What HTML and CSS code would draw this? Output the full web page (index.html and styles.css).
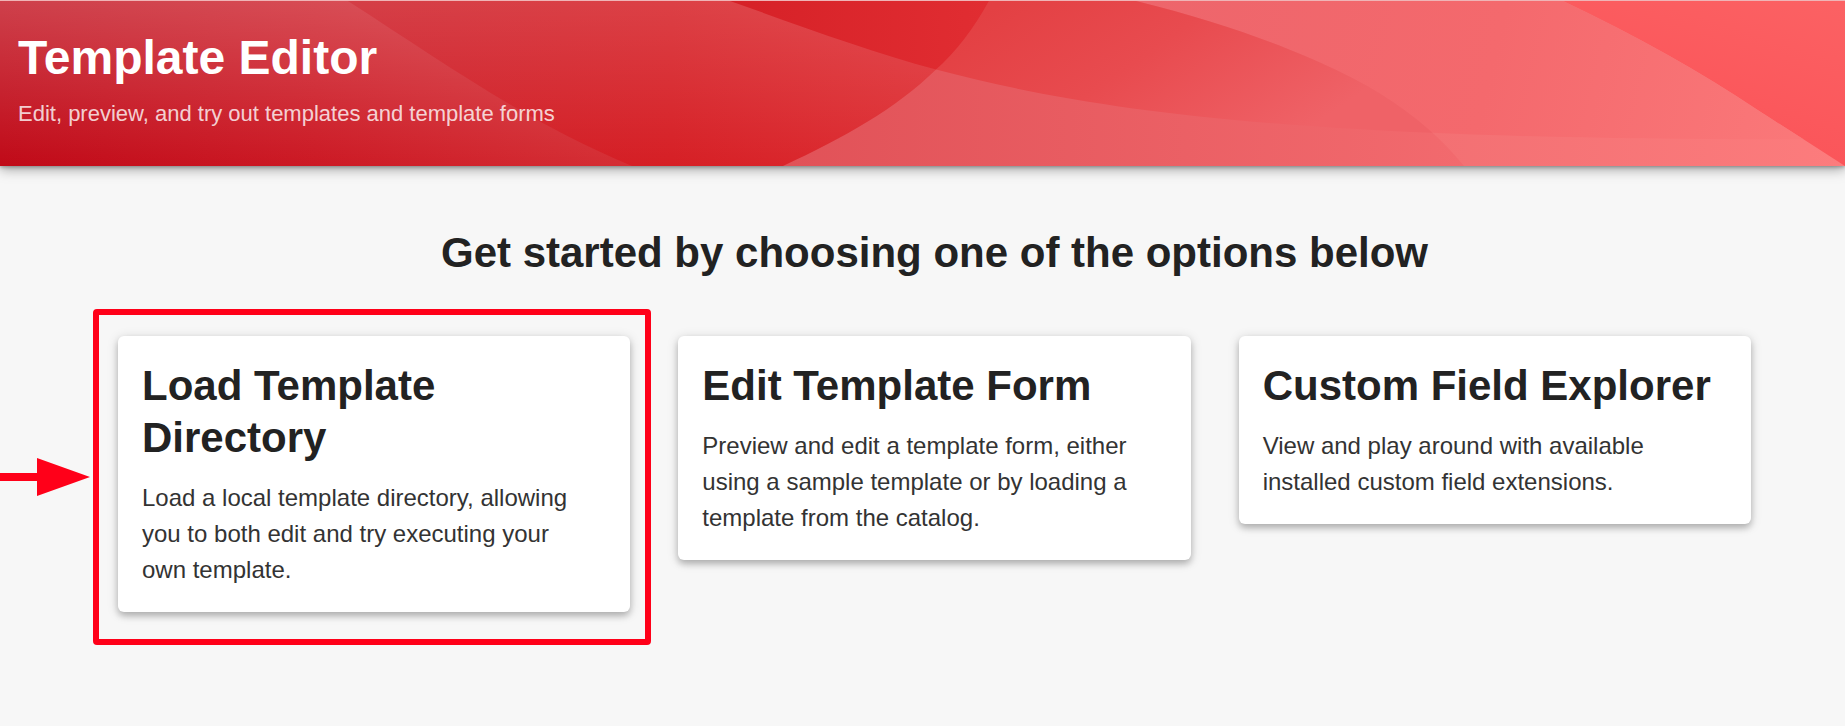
FILE: index.html
```html
<!DOCTYPE html>
<html lang="en">
<head>
<meta charset="utf-8">
<meta name="viewport" content="width=device-width, initial-scale=1">
<title>Template Editor</title>
<link rel="stylesheet" href="styles.css">
</head>
<body>
<header class="header">
  <svg class="header-art" viewBox="0 0 1845 166" preserveAspectRatio="none" aria-hidden="true">
    <defs>
      <linearGradient id="right" gradientUnits="userSpaceOnUse" x1="1700" y1="166" x2="1760" y2="-20"><stop offset="0" stop-color="#fa5257"/><stop offset=".4" stop-color="#fb585c"/><stop offset="1" stop-color="#fb6163"/></linearGradient>
      <linearGradient id="pale" gradientUnits="userSpaceOnUse" x1="1130" y1="0" x2="1845" y2="166"><stop offset="0" stop-color="#ed656b"/><stop offset=".5" stop-color="#f4696d"/><stop offset="1" stop-color="#fb7a7b"/></linearGradient>
      <linearGradient id="paleLow" gradientUnits="userSpaceOnUse" x1="1430" y1="0" x2="1845" y2="0"><stop offset="0" stop-color="#f37073"/><stop offset="1" stop-color="#fc7c7d"/></linearGradient>
      <linearGradient id="low" gradientUnits="userSpaceOnUse" x1="790" y1="0" x2="1464" y2="0"><stop offset="0" stop-color="#e15258"/><stop offset="1" stop-color="#f26a6e"/></linearGradient>
      <linearGradient id="mid" gradientUnits="userSpaceOnUse" x1="1060" y1="-40" x2="1220" y2="190"><stop offset="0" stop-color="#e34043"/><stop offset=".45" stop-color="#e84b4f"/><stop offset="1" stop-color="#ef6267"/></linearGradient>
      <linearGradient id="deep" gradientUnits="userSpaceOnUse" x1="730" y1="0" x2="989" y2="0"><stop offset="0" stop-color="#d62127"/><stop offset="1" stop-color="#e12d32"/></linearGradient>
      <linearGradient id="red" gradientUnits="userSpaceOnUse" x1="348" y1="0" x2="936" y2="0"><stop offset="0" stop-color="#cd1c26"/><stop offset=".55" stop-color="#d61f25"/><stop offset="1" stop-color="#de2d32"/></linearGradient>
      <linearGradient id="crimson" gradientUnits="userSpaceOnUse" x1="0" y1="100" x2="632" y2="100"><stop offset="0" stop-color="#c00a18"/><stop offset=".5" stop-color="#cc1924"/><stop offset="1" stop-color="#d52e34"/></linearGradient>
      <linearGradient id="sheen" x1="0" y1="0" x2="0" y2="1"><stop offset="0" stop-color="#fff" stop-opacity=".15"/><stop offset="1" stop-color="#fff" stop-opacity="0"/></linearGradient>
      <linearGradient id="sheenLeft" x1="0" y1="0" x2="0" y2="1"><stop offset="0" stop-color="#fff" stop-opacity=".22"/><stop offset="1" stop-color="#fff" stop-opacity="0"/></linearGradient>
      <clipPath id="leftOfE"><path d="M0 0H1563Q1674 53 1758 110Q1800 137 1845 166H0Z"/></clipPath>
      <clipPath id="leftOfD"><path d="M0 0H1136C1260 31 1340 68 1383 95Q1432 126 1464 166H0Z"/></clipPath>
      <clipPath id="leftOfC"><path d="M0 0H989Q966 42 936 69C895 109 845 137 783 166H0Z"/></clipPath>
      <path id="aboveB" d="M730 0C800 25 870 51 936 69C1120 118 1350 141 1845 139V0Z"/>
    </defs>
    <rect width="1845" height="166" fill="url(#right)"/>
    <g clip-path="url(#leftOfE)">
      <rect width="1845" height="166" fill="url(#paleLow)"/>
      <use href="#aboveB" fill="url(#pale)"/>
    </g>
    <g clip-path="url(#leftOfD)">
      <rect width="1845" height="166" fill="url(#low)"/>
      <use href="#aboveB" fill="url(#mid)"/>
    </g>
    <g clip-path="url(#leftOfC)">
      <rect width="1845" height="166" fill="url(#red)"/>
      <rect width="1845" height="166" fill="url(#sheen)"/>
      <use href="#aboveB" fill="url(#deep)"/>
    </g>
    <path d="M0 0H348C450 66 525 121 632 166H0Z" fill="url(#crimson)"/>
    <path d="M0 0H348C450 66 525 121 632 166H0Z" fill="url(#sheenLeft)"/>
  </svg>
  <h1 class="header-title">Template Editor</h1>
  <p class="header-subtitle">Edit, preview, and try out templates and template forms</p>
</header>
<main class="content">
  <h2 class="intro">Get started by choosing one of the options below</h2>
  <div class="options">
    <div class="option">
      <a class="card" href="#directory">
        <h3 class="card-title">Load Template Directory</h3>
        <p class="card-text">Load a local template directory, allowing you to both edit and try executing your own template.</p>
      </a>
      <div class="highlight"></div>
      <svg class="arrow" viewBox="0 0 90 38" aria-hidden="true"><path d="M0 15H37V0L90 19L37 38V23H0Z" fill="#ff0019"/></svg>
    </div>
    <div class="option">
      <a class="card" href="#form">
        <h3 class="card-title">Edit Template Form</h3>
        <p class="card-text">Preview and edit a template form, either using a sample template or by loading a template from the catalog.</p>
      </a>
    </div>
    <div class="option">
      <a class="card" href="#fields">
        <h3 class="card-title">Custom Field Explorer</h3>
        <p class="card-text">View and play around with available installed custom field extensions.</p>
      </a>
    </div>
  </div>
</main>
</body>
</html>
```
FILE: styles.css
```css
* {
  box-sizing: border-box;
}

body {
  margin: 0;
  background: #f7f7f7;
  color: #222;
  font-family: "Liberation Sans", Arial, Helvetica, sans-serif;
}

h1,
h2,
h3,
p {
  margin: 0;
}

.header {
  position: relative;
  isolation: isolate;
  padding: 29px 18px 37px;
  border-top: 1px solid #efb4b6;
  color: #fff;
  box-shadow: 0 3px 12px rgba(0, 0, 0, 0.36), 0 1px 4px rgba(0, 0, 0, 0.3);
}

.header-art {
  position: absolute;
  inset: 0;
  z-index: -1;
  width: 100%;
  height: 100%;
}

.header-title {
  font-size: 48px;
  line-height: 56px;
}

.header-subtitle {
  margin-top: 12px;
  font-size: 22px;
  line-height: 31px;
  color: rgba(255, 255, 255, 0.8);
}

.content {
  padding: 62px 94px 80px 118px;
}

.intro {
  font-size: 42px;
  line-height: 50px;
  text-align: center;
}

.options {
  display: grid;
  grid-template-columns: repeat(3, 1fr);
  align-items: start;
  gap: 48px;
  margin-top: 58px;
}

.option {
  position: relative;
}

.card {
  display: block;
  padding: 24px;
  border-radius: 6px;
  background: #fff;
  color: inherit;
  text-decoration: none;
  box-shadow: 0 4px 6px rgba(0, 0, 0, 0.2), 0 2px 12px rgba(0, 0, 0, 0.16);
}

.card-title {
  font-size: 42px;
  line-height: 52px;
}

.card-text {
  margin-top: 16px;
  padding-right: 24px;
  font-size: 24px;
  line-height: 36px;
  color: #333;
}

.highlight {
  position: absolute;
  inset: -27px -21px -33px -25px;
  border: 6px solid #ff0019;
  border-radius: 4px;
  pointer-events: none;
}

.arrow {
  position: absolute;
  top: 122px;
  left: -118px;
  width: 90px;
  height: 38px;
}
```
